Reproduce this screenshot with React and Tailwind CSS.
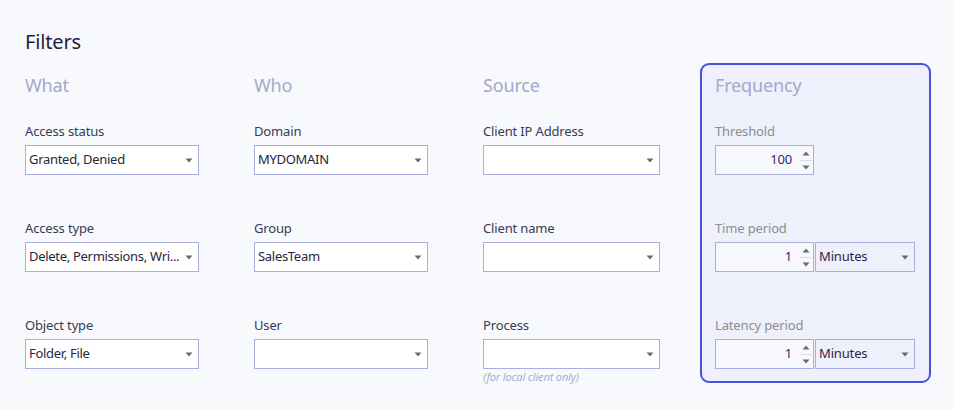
import React from "react";

function Caret() {
  return (
    <svg width="8" height="5" viewBox="0 0 8 5" className="shrink-0">
      <path d="M0.5 0.5 L7.5 0.5 L4 4.5 Z" fill="#6b6b6b" />
    </svg>
  );
}

function Select({ value, w = "w-[174px]" }) {
  return (
    <div
      className={`${w} h-[30px] mt-[5px] bg-white border border-[#a9addf] flex items-center pl-[3px] pr-[5px]`}
    >
      <span className="flex-1 whitespace-nowrap overflow-hidden text-[13px] tracking-[-0.3px] text-[#26263a]">
        {value}
      </span>
      <Caret />
    </div>
  );
}

function Field({ label, value, w, note }) {
  return (
    <div className="flex flex-col">
      <div className="h-[18px] leading-[18px] text-[13px] text-[#3a3a55]">{label}</div>
      <Select value={value} w={w} />
      {note && (
        <div className="h-0 overflow-visible">
          <div className="text-[11px] italic text-[#a9acd0] leading-[14px] mt-px">{note}</div>
        </div>
      )}
    </div>
  );
}

function Spin({ value }) {
  return (
    <div className="w-[99px] h-[30px] bg-[#f7f8fe] border border-[#a9addf] flex items-center">
      <span className="flex-1 text-right text-[13px] text-[#2c2c5e] pr-[8px]">{value}</span>
      <div className="w-[12px] h-full flex flex-col items-center justify-center mr-[1px]">
        <svg width="12" height="26" viewBox="0 0 12 26">
          <path d="M2.5 8.5 L9.5 8.5 L6 4.5 Z" fill="#6b6b6b" />
          <line x1="0" y1="13.5" x2="12" y2="13.5" stroke="#dcdde6" strokeWidth="1" />
          <path d="M2.5 18.5 L9.5 18.5 L6 22.5 Z" fill="#6b6b6b" />
        </svg>
      </div>
    </div>
  );
}

function FreqField({ label, value, unit }) {
  return (
    <div className="flex flex-col">
      <div className="h-[18px] leading-[18px] text-[13px] text-[#8d8d8d]">{label}</div>
      <div className="flex mt-[5px] gap-px">
        <Spin value={value} />
        {unit && (
          <div className="w-[100px] h-[30px] bg-[#eef0fb] border border-[#a9addf] flex items-center pl-[3px] pr-[5px]">
            <span className="flex-1 text-[13px] text-[#2e1f4a]">{unit}</span>
            <Caret />
          </div>
        )}
      </div>
    </div>
  );
}

function Column({ title, children, w, boxed }) {
  return (
    <div
      className={`${w} border-2 ${
        boxed ? "border-[#4a4ee3] rounded-[9px] bg-[#eef0fb] pl-[13px] pb-[12px]" : "border-transparent"
      }`}
    >
      <div className="pt-[8px] h-[32px] leading-[24px] text-[18px] text-[#a4a8cd]">{title}</div>
      <div className="mt-[25px] flex flex-col gap-[44px]">{children}</div>
    </div>
  );
}

export default function App() {
  return (
    <div
      className="w-[953px] h-[410px] bg-[#f7f9fc] pl-[23px] pt-[28px] tracking-[-0.15px]"
      style={{ fontFamily: '"Noto Sans", "Open Sans", sans-serif' }}
    >
      <div className="pl-[2px] h-[28px] leading-[28px] text-[20px] text-[#1f1f3d]">Filters</div>
      <div className="flex mt-[7px]">
        <Column title="What" w="w-[229px]">
          <Field label="Access status" value="Granted, Denied" />
          <Field label="Access type" value="Delete, Permissions, Wri..." />
          <Field label="Object type" value="Folder, File" />
        </Column>
        <Column title="Who" w="w-[229px]">
          <Field label="Domain" value="MYDOMAIN" />
          <Field label="Group" value="SalesTeam" />
          <Field label="User" value="" />
        </Column>
        <Column title="Source" w="w-[219px]">
          <Field label="Client IP Address" value="" w="w-[177px]" />
          <Field label="Client name" value="" w="w-[177px]" />
          <Field label="Process" value="" w="w-[177px]" note="(for local client only)" />
        </Column>
        <Column title="Frequency" w="w-[231px]" boxed>
          <FreqField label="Threshold" value="100" />
          <FreqField label="Time period" value="1" unit="Minutes" />
          <FreqField label="Latency period" value="1" unit="Minutes" />
        </Column>
      </div>
    </div>
  );
}
